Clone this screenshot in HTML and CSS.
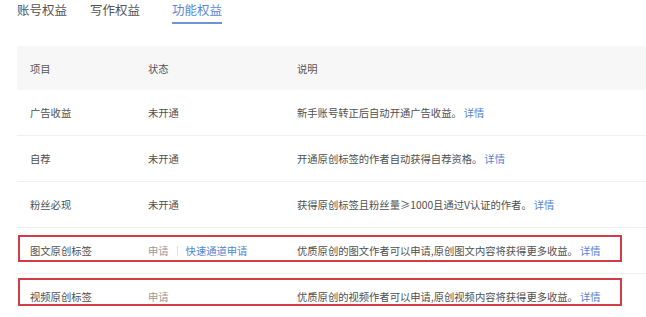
FILE: index.html
```html
<!DOCTYPE html>
<html lang="zh">
<head>
<meta charset="utf-8">
<link rel="stylesheet" href="styles.css">
</head>
<body>
<div class="page">
  <div class="tabs">
    <div class="tab tab-a">账号权益</div>
    <div class="tab tab-b">写作权益</div>
    <div class="tab active">功能权益</div>
  </div>
  <div class="table">
    <div class="row head">
      <div>项目</div>
      <div>状态</div>
      <div>说明</div>
    </div>
    <div class="row">
      <div>广告收益</div>
      <div>未开通</div>
      <div>新手账号转正后自动开通广告收益。<a class="link">详情</a></div>
    </div>
    <div class="row">
      <div>自荐</div>
      <div>未开通</div>
      <div>开通原创标签的作者自动获得自荐资格。<a class="link">详情</a></div>
    </div>
    <div class="row">
      <div>粉丝必现</div>
      <div>未开通</div>
      <div>获得原创标签且粉丝量≥1000且通过V认证的作者。<a class="link">详情</a></div>
    </div>
    <div class="row marked">
      <div>图文原创标签</div>
      <div class="status"><span class="muted">申请</span><span class="sep"></span><a class="link">快速通道申请</a></div>
      <div>优质原创的图文作者可以申请,原创图文内容将获得更多收益。<a class="link">详情</a></div>
      <span class="box box-1"></span>
    </div>
    <div class="row marked">
      <div>视频原创标签</div>
      <div class="status"><span class="muted">申请</span></div>
      <div>优质原创的视频作者可以申请,原创视频内容将获得更多收益。<a class="link">详情</a></div>
      <span class="box box-2"></span>
    </div>
  </div>
</div>
</body>
</html>
```

FILE: styles.css
```css
html, body {
  margin: 0;
  padding: 0;
  background: #ffffff;
}
body {
  font-family: "Noto Sans CJK SC", "Noto Sans", sans-serif;
  color: #505050;
  overflow: hidden;
}
.page {
  padding-left: 17px;
  padding-top: 1px;
}
.tabs {
  display: flex;
  font-size: 12.5px;
}
.tab {
  line-height: 18px;
  padding-bottom: 3px;
  border-bottom: 2px solid transparent;
  color: #555555;
}
.tab-a { margin-right: 23px; }
.tab-b { margin-right: 32px; }
.tab.active {
  color: #5b87d4;
  border-bottom-color: #6d93d8;
}
.table {
  margin-top: 22px;
  font-size: 10.3px;
}
.row {
  position: relative;
  display: grid;
  grid-template-columns: 118px 149px 1fr;
  align-items: center;
  padding-left: 13px;
  height: 45px;
  border-bottom: 1px solid #f0f0f0;
}
.row.head {
  height: 44px;
  background: #f7f7f7;
  border-bottom: none;
  color: #555555;
}
.link {
  color: #5584d3;
  margin-left: 2px;
}
.status {
  display: flex;
  align-items: center;
}
.muted {
  color: #9a9a9a;
}
.sep {
  width: 1px;
  height: 10px;
  background: #e2e2e2;
  margin: 0 8px;
}
.status .link {
  margin-left: 0;
}
.box {
  position: absolute;
  left: 1px;
  width: 604px;
  border: 2px solid #d23c46;
  box-sizing: border-box;
}
.box-1 {
  top: 7px;
  height: 27px;
}
.box-2 {
  top: 4px;
  height: 28px;
}
```
